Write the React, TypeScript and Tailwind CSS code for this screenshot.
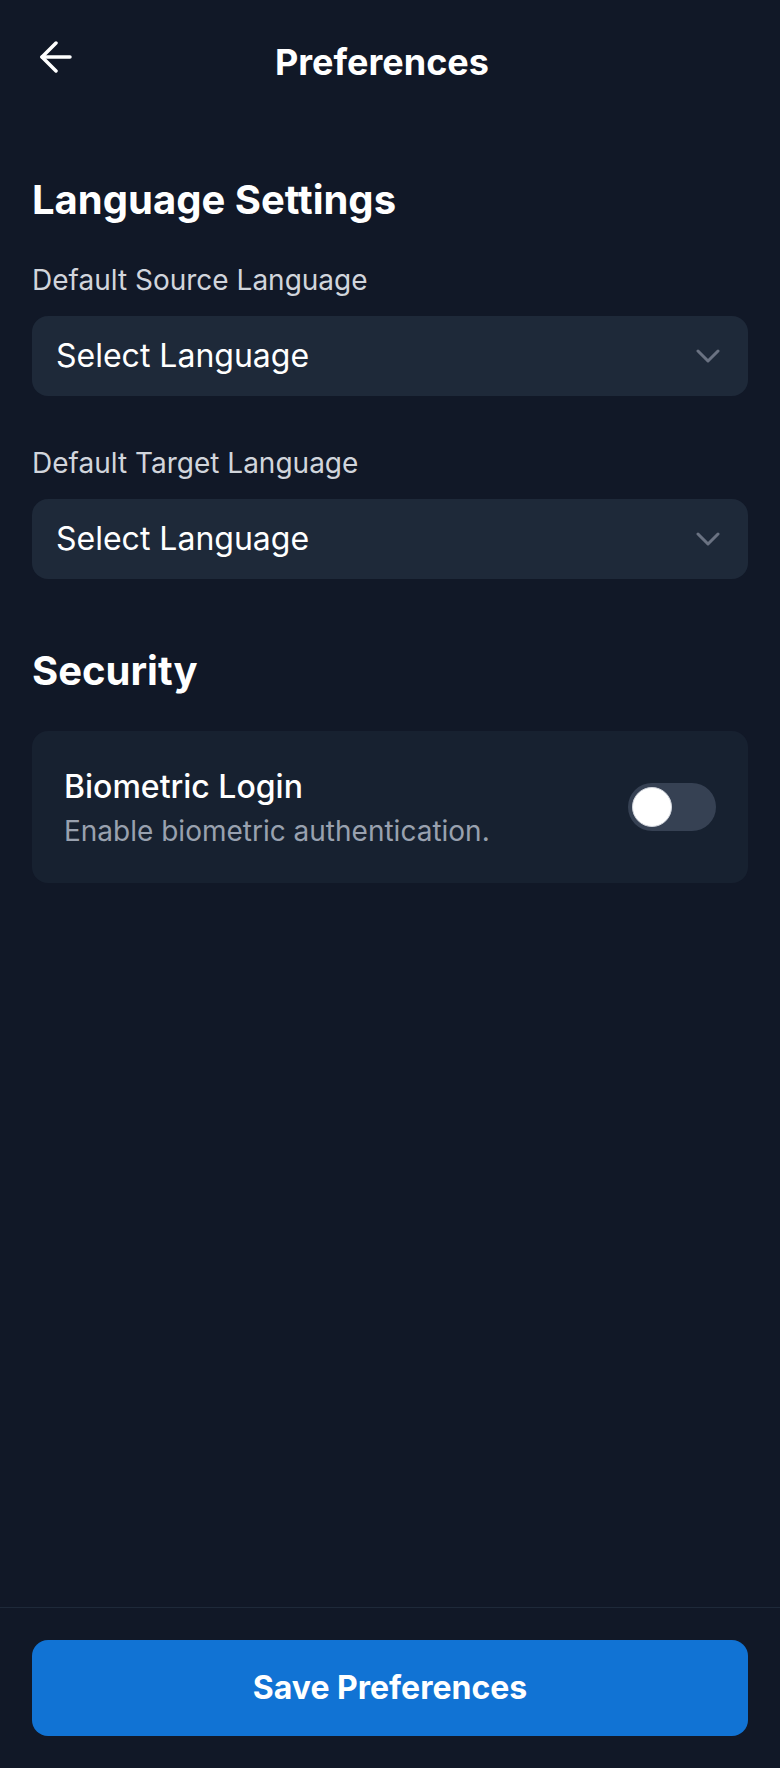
import React from "react";

const ArrowBack = () => (
	<svg width="32" height="32" viewBox="0 0 32 32" fill="none" stroke="currentColor" strokeWidth="3.5" strokeLinecap="round" strokeLinejoin="round">
		<path d="M2 16h28" />
		<path d="M16 2 2 16l14 14" />
	</svg>
);

const Chevron = () => (
	<svg width="24" height="14" viewBox="0 0 24 14" fill="none" stroke="currentColor" strokeWidth="3" strokeLinecap="round" strokeLinejoin="round">
		<path d="M2 2l10 10L22 2" />
	</svg>
);

interface SelectFieldProps {
	label: string;
}

const SelectField: React.FC<SelectFieldProps> = ({ label }) => {
	return (
		<div className="flex flex-col">
			<label className="text-[28px] leading-[40px] text-gray-300 mb-[16px]">{label}</label>
			<div className="flex items-center justify-between h-[80px] rounded-[16px] bg-gray-800 pl-[24px] pr-[28px]">
				<span className="text-[32px] leading-[48px] text-white">Select Language</span>
				<span className="text-gray-500">
					<Chevron />
				</span>
			</div>
		</div>
	);
};

export default function App() {
	return (
		<div
			className="min-h-[1768px] flex flex-col bg-[#111827] text-white"
			style={{ fontFamily: "Inter, 'Noto Sans', sans-serif" }}
		>
			<header className="flex items-center px-[32px] pt-[33px]">
				<button className="w-[48px] h-[48px] mb-[10px] flex items-center justify-center text-white">
					<ArrowBack />
				</button>
				<h1 className="flex-1 text-center text-[36px] leading-[56px] font-bold">Preferences</h1>
				<div className="w-[64px]" />
			</header>

			<main className="flex flex-col px-[32px] pt-[81px]">
				<h2 className="text-[40px] leading-[56px] font-bold mb-[32px]">Language Settings</h2>
				<div className="flex flex-col gap-[47px]">
					<SelectField label="Default Source Language" />
					<SelectField label="Default Target Language" />
				</div>

				<h2 className="text-[40px] leading-[56px] font-bold mt-[64px] mb-[32px]">Security</h2>
				<div className="flex items-center justify-between rounded-[16px] bg-gray-800/50 p-[32px]">
					<div className="flex flex-col">
						<span className="text-[32px] leading-[48px] font-medium text-white">Biometric Login</span>
						<span className="text-[28px] leading-[40px] text-gray-400">Enable biometric authentication.</span>
					</div>
					<div className="flex items-center w-[88px] h-[48px] rounded-full bg-gray-700 p-[4px]">
						<div className="w-[40px] h-[40px] rounded-full bg-white border border-gray-300" />
					</div>
				</div>
			</main>

			<footer className="mt-auto border-t border-gray-800 p-[32px]">
				<button className="w-full h-[96px] rounded-[16px] bg-[#1173d4] text-[32px] font-bold text-white">
					Save Preferences
				</button>
			</footer>
		</div>
	);
}
